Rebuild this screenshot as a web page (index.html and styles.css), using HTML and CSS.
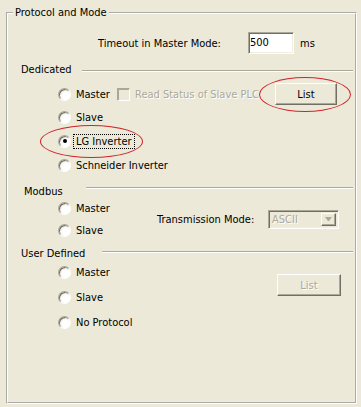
FILE: index.html
```html
<!DOCTYPE html>
<html lang="en">
<head>
  <meta charset="UTF-8">
  <title>Protocol and Mode</title>
  <link rel="stylesheet" href="styles.css">
</head>
<body>
  <div class="dialog">
    <fieldset class="group">
      <legend>Protocol and Mode</legend>

      <div class="timeout-row">
        <span class="timeout-label">Timeout in Master Mode:</span>
        <span class="textbox">500</span>
        <span class="unit">ms</span>
      </div>

      <!-- Dedicated -->
      <div class="section-head dedicated-head">
        <span class="section-label">Dedicated</span>
        <span class="rule"></span>
      </div>
      <div class="option first">
        <span class="choice"><span class="radio"></span><span>Master</span></span>
        <span class="checkbox"></span>
        <span class="muted">Read Status of Slave PLC</span>
        <button class="btn list-btn">List</button>
      </div>
      <div class="option">
        <span class="choice"><span class="radio"></span><span>Slave</span></span>
      </div>
      <div class="option">
        <span class="choice"><span class="radio checked"></span><span class="focused">LG Inverter</span></span>
      </div>
      <div class="option">
        <span class="choice"><span class="radio"></span><span>Schneider Inverter</span></span>
      </div>

      <!-- Modbus -->
      <div class="section-head modbus-head">
        <span class="section-label">Modbus</span>
        <span class="rule"></span>
      </div>
      <div class="split modbus">
        <div class="radio-col">
          <span class="choice"><span class="radio"></span><span>Master</span></span>
          <span class="choice"><span class="radio"></span><span>Slave</span></span>
        </div>
        <div class="transmission">
          <span class="transmission-label">Transmission Mode:</span>
          <span class="combo">
            <span class="combo-text">ASCII</span>
            <span class="combo-btn"><span class="arrow"></span></span>
          </span>
        </div>
      </div>

      <!-- User Defined -->
      <div class="section-head user-head">
        <span class="section-label">User Defined</span>
        <span class="rule"></span>
      </div>
      <div class="split user">
        <div class="radio-col">
          <span class="choice"><span class="radio"></span><span>Master</span></span>
          <span class="choice"><span class="radio"></span><span>Slave</span></span>
          <span class="choice"><span class="radio"></span><span>No Protocol</span></span>
        </div>
        <button class="btn user-list" disabled>List</button>
      </div>
    </fieldset>

    <div class="mark mark-list"></div>
    <div class="mark mark-lg"></div>
  </div>
</body>
</html>
```

FILE: styles.css
```css
:root {
  --face: #ece9d8;
  --shadow: #aca899;
  --dark-shadow: #716f64;
  --highlight: #ffffff;
  --mark: #d2232a;
}

html, body {
  margin: 0;
  padding: 0;
}

body {
  background-color: var(--face);
  color: #000;
  font-family: "DejaVu Sans Condensed", "DejaVu Sans", sans-serif;
  font-size: 11px;
}

.dialog {
  position: relative;
  box-sizing: border-box;
  width: 361px;
  height: 407px;
  padding-top: 6px;
  overflow: hidden;
}

/* Etched group box */
.group {
  box-sizing: border-box;
  width: 351px;
  min-width: 0;
  margin: 0 0 0 6px;
  padding: 12px 0 68px;
  border: 2px groove var(--highlight);
}

.group legend {
  margin-left: 5px;
  padding: 0 2px;
  line-height: 14px;
}

.timeout-row {
  display: flex;
  align-items: center;
  height: 22px;
  padding-left: 90px;
}

.timeout-label {
  width: 150px;
}

.textbox {
  box-sizing: border-box;
  width: 46px;
  height: 22px;
  padding-left: 1px;
  line-height: 19px;
  background-color: #fff;
  border: 1px solid;
  border-color: var(--shadow) var(--highlight) var(--highlight) var(--shadow);
  box-shadow: inset 1px 1px 0 var(--dark-shadow), inset -1px -1px 0 #f1efe2;
}

.unit {
  margin-left: 6px;
}

/* Section headings with a rule */
.section-head {
  display: flex;
  height: 12px;
  line-height: 12px;
}

.section-label {
  box-sizing: border-box;
  padding-left: 13px;
}

.rule {
  flex: 1;
  height: 0;
  margin-right: 2px;
  border-top: 1px solid var(--shadow);
  border-bottom: 1px solid var(--highlight);
}

.dedicated-head {
  margin-top: 10px;
}

.dedicated-head .section-label {
  width: 74px;
}

.dedicated-head .rule {
  margin-top: 6px;
}

.modbus-head {
  margin-top: 9px;
}

.modbus-head .section-label {
  width: 78px;
  padding-left: 16px;
}

.modbus-head .rule {
  margin-top: 1px;
}

.user-head {
  margin-top: 8px;
}

.user-head .section-label {
  width: 94px;
}

.user-head .rule {
  margin-top: 3px;
}

/* Options */
.option {
  display: flex;
  align-items: center;
  height: 24px;
  padding-left: 50px;
}

.option.first {
  height: 22px;
  margin-top: 7px;
}

.choice {
  display: flex;
  align-items: center;
  gap: 5px;
}

.first .choice {
  width: 59px;
}

.radio {
  display: flex;
  align-items: center;
  justify-content: center;
  box-sizing: border-box;
  width: 13px;
  height: 13px;
  border-radius: 50%;
  border: 1px solid;
  border-color: var(--shadow) var(--highlight) var(--highlight) var(--shadow);
  background: radial-gradient(circle at 65% 65%, #fff 35%, #dcd9cd 100%);
  box-shadow: inset 1px 1px 0 var(--dark-shadow);
}

.radio.checked::after {
  content: "";
  width: 4px;
  height: 4px;
  border-radius: 50%;
  background-color: #000;
}

.focused {
  margin-left: -2px;
  padding: 0 2px;
  line-height: 13px;
  outline: 1px dotted #000;
}

.checkbox {
  box-sizing: border-box;
  width: 13px;
  height: 13px;
  margin-right: 5px;
  border: 1px solid;
  border-color: var(--shadow) var(--highlight) var(--highlight) var(--shadow);
  box-shadow: inset 1px 1px 0 var(--shadow);
}

.muted {
  color: var(--shadow);
  text-shadow: 1px 1px 0 var(--highlight);
}

/* Push buttons */
.btn {
  box-sizing: border-box;
  height: 22px;
  padding: 0;
  font: inherit;
  color: #000;
  background-color: var(--face);
  border: 1px solid;
  border-color: var(--highlight) var(--dark-shadow) var(--dark-shadow) var(--highlight);
  border-radius: 0;
  box-shadow: inset -1px -1px 0 var(--shadow);
}

.btn:disabled {
  color: var(--shadow);
  text-shadow: 1px 1px 0 var(--highlight);
}

.list-btn {
  width: 62px;
  margin-left: auto;
  margin-right: 18px;
}

/* Two-column blocks */
.split {
  display: flex;
}

.radio-col {
  box-sizing: border-box;
  display: flex;
  flex-direction: column;
  width: 149px;
  padding-left: 50px;
}

.modbus .radio-col {
  gap: 2px;
}

.modbus .choice {
  height: 20px;
}

.transmission {
  display: flex;
  align-items: center;
}

.transmission-label {
  width: 111px;
}

.combo {
  box-sizing: border-box;
  display: flex;
  align-items: center;
  width: 71px;
  height: 19px;
  padding: 2px;
  border: 1px solid;
  border-color: var(--shadow) var(--highlight) var(--highlight) var(--shadow);
  box-shadow: inset 1px 1px 0 var(--dark-shadow), inset -1px -1px 0 #f1efe2;
}

.combo-text {
  flex: 1;
  padding-left: 1px;
  color: var(--shadow);
  text-shadow: 1px 1px 0 var(--highlight);
}

.combo-btn {
  box-sizing: border-box;
  display: flex;
  align-items: center;
  justify-content: center;
  width: 15px;
  height: 13px;
  border: 1px solid;
  border-color: var(--highlight) var(--dark-shadow) var(--dark-shadow) var(--highlight);
  box-shadow: inset -1px -1px 0 var(--shadow);
}

.arrow {
  width: 1px;
  height: 0;
  border-left: 3px solid transparent;
  border-right: 3px solid transparent;
  border-top: 4px solid var(--shadow);
}

.user .radio-col {
  gap: 1px;
}

.user .choice {
  height: 24px;
}

.user-list {
  width: 64px;
  margin-top: 14px;
  margin-left: auto;
  margin-right: 14px;
}

/* Red annotation ellipses */
.mark {
  position: absolute;
  border: 1px solid var(--mark);
  border-radius: 50%;
}

.mark-list {
  left: 259px;
  top: 77px;
  width: 90px;
  height: 33px;
}

.mark-lg {
  left: 40px;
  top: 125px;
  width: 101px;
  height: 31px;
}
```
